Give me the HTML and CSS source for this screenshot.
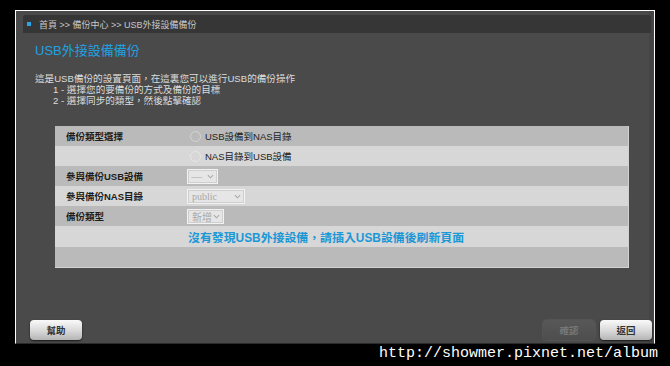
FILE: index.html
```html
<!DOCTYPE html>
<html lang="zh-Hant">
<head>
    <meta charset="UTF-8">
    <title>USB外接設備備份</title>
<link rel="stylesheet" href="styles.css">
</head>

<body>
    <div class="frame">
        <div class="crumb">
            <span class="crumb-dot"></span>
            <span>首頁 &gt;&gt; 備份中心 &gt;&gt; USB外接設備備份</span>
        </div>

        <div class="content">
            <h1 class="title">USB外接設備備份</h1>

            <div class="desc">
                <p>這是USB備份的設置頁面，在這裏您可以進行USB的備份操作</p>
                <p class="step">1 - 選擇您的要備份的方式及備份的目標</p>
                <p class="step">2 - 選擇同步的類型，然後點擊確認</p>
            </div>

            <div class="table">
                <div class="row odd">
                    <div class="label">備份類型選擇</div>
                    <div class="value"><span class="radio"></span>USB設備到NAS目錄</div>
                </div>
                <div class="row even">
                    <div class="label"></div>
                    <div class="value"><span class="radio"></span>NAS目錄到USB設備</div>
                </div>
                <div class="row odd">
                    <div class="label">參與備份USB設備</div>
                    <div class="value">
                        <span class="select sel-usb"><span class="dash">-----</span><svg class="chev" viewBox="0 0 8 5"><path d="M1 1 L4 4 L7 1" /></svg></span>
                    </div>
                </div>
                <div class="row even">
                    <div class="label">參與備份NAS目錄</div>
                    <div class="value">
                        <span class="select sel-nas serif">public<svg class="chev" viewBox="0 0 8 5"><path d="M1 1 L4 4 L7 1" /></svg></span>
                    </div>
                </div>
                <div class="row odd">
                    <div class="label">備份類型</div>
                    <div class="value">
                        <span class="select sel-type">新增<svg class="chev" viewBox="0 0 8 5"><path d="M1 1 L4 4 L7 1" /></svg></span>
                    </div>
                </div>
                <div class="row even msg-row">
                    <div class="label"></div>
                    <div class="value msg">沒有發現USB外接設備，請插入USB設備後刷新頁面</div>
                </div>
                <div class="row odd"></div>
            </div>
        </div>

        <div class="actions">
            <button class="btn">幫助</button>
            <div class="actions-right">
                <button class="btn btn-disabled">確認</button>
                <button class="btn">返回</button>
            </div>
        </div>
    </div>

    <div class="watermark">http://showmer.pixnet.net/album</div>
</body>
</html>
```

FILE: styles.css
```css
* {
    margin: 0;
    padding: 0;
    box-sizing: border-box;
}

body {
    width: 670px;
    height: 366px;
    background: #000;
    font-family: "Liberation Sans", "Noto Sans CJK TC", sans-serif;
    overflow: hidden;
}

/* Frame */
.frame {
    margin: 10px 0 0 15px;
    width: 640px;
    height: 334px;
    border: 1px solid #fff;
    border-bottom-color: #2a2a2a;
    background: #4a4a4a;
    display: flex;
    flex-direction: column;
    padding-top: 4px;
    box-shadow: inset -5px 0 0 #444;
}

/* Breadcrumb */
.crumb {
    margin: 0 3px 0 7px;
    height: 18px;
    background: #363636;
    border-radius: 3px 3px 0 0;
    display: flex;
    align-items: center;
    padding-left: 4px;
    color: #c8c8c8;
    font-size: 9px;
}

.crumb-dot {
    width: 4px;
    height: 4px;
    background: #2aa6ea;
    margin-right: 8px;
}

/* Content */
.content {
    padding-left: 19px;
}

.title {
    margin-top: 9px;
    font-size: 13px;
    line-height: 18px;
    font-weight: normal;
    color: #1fa2e2;
}

.desc {
    margin-top: 13px;
    color: #dcdcdc;
    font-size: 9.6px;
    line-height: 11px;
}

.desc .step {
    padding-left: 18px;
}

/* Table */
.table {
    margin: 20px 0 0 20px;
    width: 574px;
    border-right: 1px solid #d2d2d2;
    border-bottom: 1px solid #d2d2d2;
}

.row {
    height: 20px;
    display: flex;
    align-items: center;
}

.row.odd {
    background: #bababa;
}

.row.even {
    background: #d7d7d7;
}

.row.msg-row {
    height: 21px;
}

.label {
    width: 132px;
    padding-left: 11px;
    font-size: 9.5px;
    font-weight: bold;
    color: #1c1c1c;
}

.value {
    display: flex;
    align-items: center;
    font-size: 9.5px;
    color: #222;
}

.radio {
    width: 11px;
    height: 11px;
    border-radius: 50%;
    border: 1px solid rgba(255, 255, 255, 0.35);
    margin: 0 4px 0 3px;
}

.select {
    height: 15px;
    display: flex;
    align-items: center;
    justify-content: space-between;
    padding: 0 3px 0 4px;
    background: #e6e6e6;
    border: 1px solid #f2f2f2;
    box-shadow: inset 0 0 0 1px #cfcfcf;
    color: #a8a8a8;
    font-size: 10px;
}

.serif {
    font-family: "Liberation Serif", serif;
}

.sel-usb {
    width: 31px;
    padding-left: 3px;
}

.dash {
    font-size: 8px;
    letter-spacing: -0.5px;
}

.sel-nas {
    width: 58px;
}

.sel-type {
    width: 37px;
}

.chev {
    width: 7px;
    height: 5px;
    flex-shrink: 0;
    fill: none;
    stroke: #a8a8a8;
    stroke-width: 1.2;
}

.msg {
    padding-left: 1px;
    font-size: 11.9px;
    font-weight: bold;
    color: #1c98d6;
}

/* Bottom buttons */
.actions {
    margin-top: auto;
    margin-bottom: 3px;
    display: flex;
    justify-content: space-between;
    padding: 0 2px 0 14px;
}

.actions-right {
    display: flex;
    gap: 5px;
}

.btn {
    width: 52px;
    height: 20px;
    border: none;
    border-radius: 4px;
    background: linear-gradient(#fafafa, #d8d8d8 55%, #b4b4b4);
    box-shadow: 0 1px 2px rgba(0, 0, 0, 0.7);
    font-family: "Liberation Sans", "Noto Sans CJK TC", sans-serif;
    font-size: 9.5px;
    font-weight: bold;
    color: #333;
}

.btn-disabled {
    background: linear-gradient(#585858, #4e4e4e);
    box-shadow: 0 0 0 1px #545454;
    color: #777;
}

/* Watermark */
.watermark {
    text-align: right;
    padding-right: 12px;
    margin-top: 1px;
    font-family: "Liberation Mono", monospace;
    font-size: 15px;
    line-height: 17px;
    color: #fff;
}
```
